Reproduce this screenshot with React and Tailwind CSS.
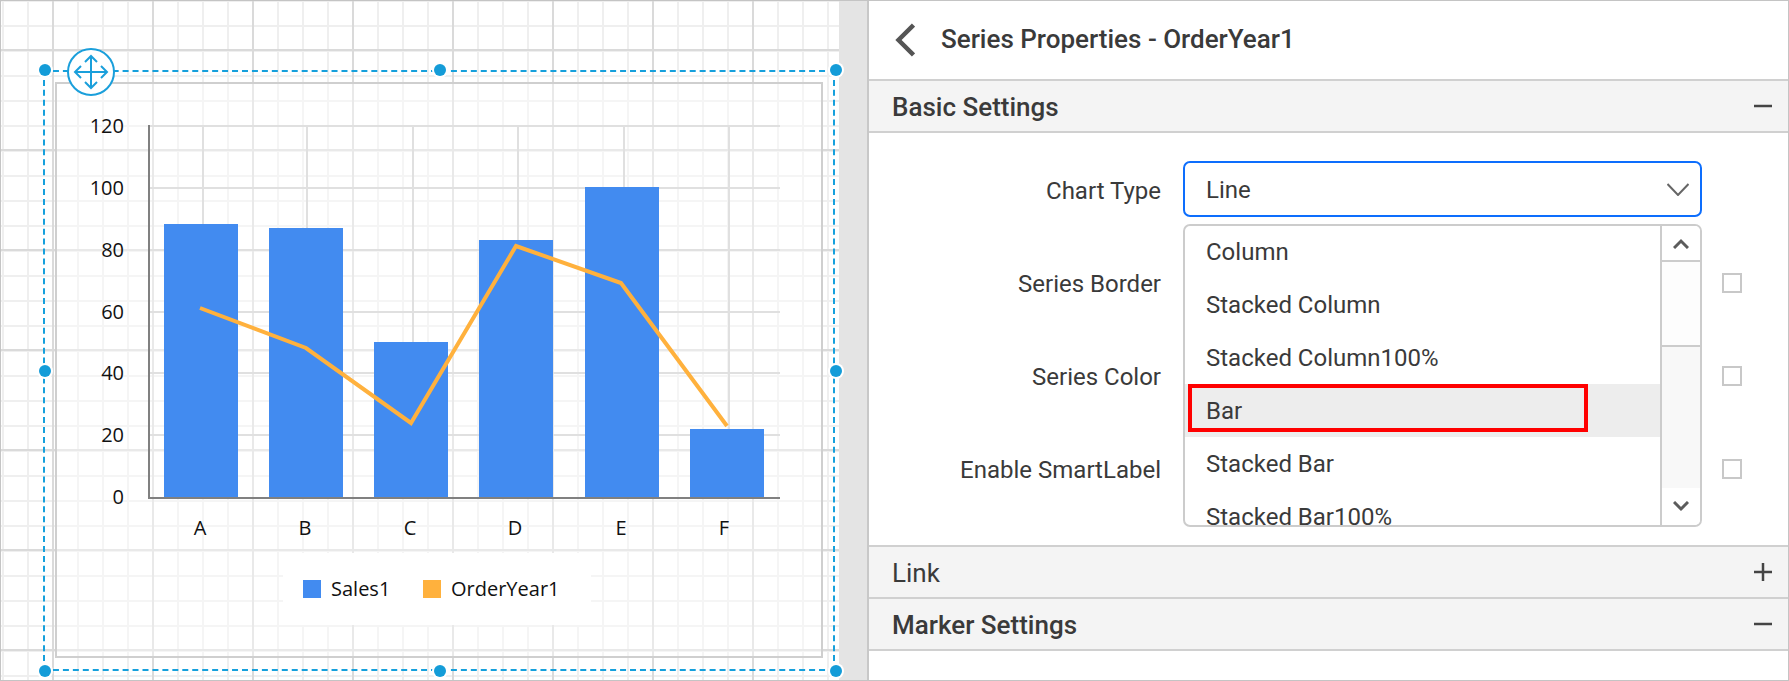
import React from 'react';

const bars = [
  { label: 'A', x: 164, top: 224 },
  { label: 'B', x: 269, top: 228 },
  { label: 'C', x: 374, top: 342 },
  { label: 'D', x: 479, top: 240 },
  { label: 'E', x: 585, top: 187 },
  { label: 'F', x: 690, top: 429 },
];
const gridY = [126, 188, 250, 312, 373, 435];
const gridX = [203, 307, 413, 518, 624, 729];
const ticks = [
  { v: '120', y: 126 },
  { v: '100', y: 188 },
  { v: '80', y: 250 },
  { v: '60', y: 312 },
  { v: '40', y: 373 },
  { v: '20', y: 435 },
  { v: '0', y: 497 },
];
const items = ['Column', 'Stacked Column', 'Stacked Column100%', 'Bar', 'Stacked Bar', 'Stacked Bar100%'];

function Handle({ className }) {
  return <span className={`absolute w-[12px] h-[12px] rounded-full bg-[#149cd8] ring-2 ring-white ${className}`} />;
}

function MoveIcon() {
  return (
    <svg className="absolute left-[21px] top-[-25px]" width="50" height="50" viewBox="0 0 50 50" fill="none" stroke="#1a9fdb" strokeWidth="2">
      <circle cx="25" cy="25" r="23" fill="#fff" />
      <path d="M25 9V41M9 25H41" />
      <path d="M19 15L25 9L31 15M19 35L25 41L31 35M15 19L9 25L15 31M35 19L41 25L35 31" />
    </svg>
  );
}

function Chart() {
  return (
    <svg width="763" height="469" viewBox="57 84 763 469" className="block" style={{ fontFamily: '"Open Sans", sans-serif' }}>
      {gridY.map((y) => (
        <line key={y} x1="149" x2="780" y1={y} y2={y} stroke="#e0e0e0" strokeWidth="2" />
      ))}
      {gridX.map((x) => (
        <line key={x} x1={x} x2={x} y1="126" y2="497" stroke="#e0e0e0" strokeWidth="2" />
      ))}
      {bars.map((b) => (
        <rect key={b.label} x={b.x} y={b.top} width="74" height={497 - b.top} fill="#428bf0" />
      ))}
      <path d="M149 125V498H780" fill="none" stroke="#808080" strokeWidth="2" />
      <polyline points="200,308 306,348 411,423 516,246 621,283 727,426" fill="none" stroke="#ffb13d" strokeWidth="4" />
      {ticks.map((t) => (
        <text key={t.v} x="124" y={t.y + 7} textAnchor="end" fontSize="20" fill="#111">{t.v}</text>
      ))}
      {bars.map((b, i) => (
        <text key={b.label} x={b.x + 36 - (i === 5 ? 2 : 0)} y="535" textAnchor="middle" fontSize="20" fill="#111">{b.label}</text>
      ))}
    </svg>
  );
}

function Legend() {
  return (
    <div className="ml-[226px] w-[308px] h-[72px] bg-white flex items-center pl-[20px] text-[20px] text-[#111] font-['Open_Sans',sans-serif]">
      <span className="w-[18px] h-[18px] bg-[#428bf0]" />
      <span className="ml-[10px] w-[92px]">Sales1</span>
      <span className="w-[18px] h-[18px] bg-[#ffb13d]" />
      <span className="ml-[10px]">OrderYear1</span>
    </div>
  );
}

function SectionHeader({ title, medium, icon }) {
  return (
    <div className="h-[52px] shrink-0 flex items-center justify-between bg-[#f4f4f4] border-b-2 border-[#d0d0d0] pl-[23px] pr-[16px]">
      <span className={`text-[26px] leading-[30px] translate-y-[1px] text-[#3a3a3a] ${medium ? 'font-medium' : ''}`}>{title}</span>
      <svg width="18" height="18" viewBox="0 0 18 18" stroke="#444" strokeWidth="2.5">
        <path d={icon === 'plus' ? 'M0 9H18M9 0V18' : 'M0 9H18'} />
      </svg>
    </div>
  );
}

function CheckRow({ label }) {
  return (
    <div className="h-[56px] flex items-center">
      <span className="w-[292px] text-right text-[24px] leading-[28px] translate-y-[1px] text-[#3a3a3a]">{label}</span>
      <span className="ml-[561px] w-[20px] h-[20px] border-2 border-[#c8c8c8]" />
    </div>
  );
}

function DropdownList() {
  return (
    <div className="absolute left-[314px] top-[91px] w-[519px] h-[303px] flex bg-white border-2 border-[#cccccc] rounded-[7px] overflow-hidden">
      <div className="flex-1 -mt-[1px] text-[24px] leading-[28px] text-[#3a3a3a]">
        {items.map((item) => (
          <div key={item} className={`relative h-[53px] flex items-center pl-[21px] ${item === 'Bar' ? 'bg-[#ededed]' : ''}`}>
            {item}
            {item === 'Bar' && <span className="absolute left-[3px] top-0 w-[400px] h-[48px] border-4 border-[#ff0000]" />}
          </div>
        ))}
      </div>
      <div className="w-[40px] flex flex-col border-l-2 border-[#cccccc]">
        <div className="h-[36px] flex items-center justify-center bg-white border-b-2 border-[#cccccc]">
          <svg width="16" height="11" viewBox="0 0 16 11" fill="none" stroke="#5c5c5c" strokeWidth="3"><path d="M1 10L8 3L15 10" /></svg>
        </div>
        <div className="h-[85px] bg-[#fdfdfd] border-b-2 border-[#cccccc]" />
        <div className="flex-1 bg-[#f8f8f8]" />
        <div className="h-[37px] flex items-center justify-center bg-white">
          <svg width="16" height="11" viewBox="0 0 16 11" fill="none" stroke="#5c5c5c" strokeWidth="3"><path d="M1 1L8 8L15 1" /></svg>
        </div>
      </div>
    </div>
  );
}

export default function App() {
  return (
    <div className="w-[1789px] h-[681px] flex overflow-hidden bg-white border border-[#c4c4c4] font-['Roboto',sans-serif]">
      <div className="w-[838px] shrink-0 pl-[42px] pt-[69px] bg-white bg-[linear-gradient(to_right,#dadada_2px,transparent_2px),linear-gradient(to_bottom,#dadada_2px,transparent_2px),linear-gradient(to_right,#efefef_2px,transparent_2px),linear-gradient(to_bottom,#efefef_2px,transparent_2px)] bg-[size:100px_100px,100px_100px,25px_25px,25px_25px] bg-[position:51px_0,0_48px,1px_0,0_-1px]">
        <div className="relative w-[792px] h-[601px] p-[10px] border-2 border-dashed border-[#16a0dc]">
          <Handle className="left-[-6px] top-[-8px]" />
          <Handle className="left-[389px] top-[-8px]" />
          <Handle className="right-[-9px] top-[-8px]" />
          <Handle className="left-[-6px] top-[293px]" />
          <Handle className="right-[-9px] top-[293px]" />
          <Handle className="left-[-6px] bottom-[-8px]" />
          <Handle className="left-[389px] bottom-[-8px]" />
          <Handle className="right-[-9px] bottom-[-8px]" />
          <MoveIcon />
          <div className="w-[768px] h-[576px] border-2 border-[#cfcfcf] bg-white/40">
            <Chart />
            <Legend />
          </div>
        </div>
      </div>
      <div className="w-[28px] shrink-0 bg-[#e4e4e4]" />
      <div className="flex-1 flex flex-col border-l-2 border-[#c8c8c8]">
        <div className="h-[80px] shrink-0 flex items-center border-b-2 border-[#d0d0d0]">
          <svg className="ml-[26px]" width="20" height="34" viewBox="0 0 20 34" fill="none" stroke="#555" strokeWidth="4.5"><path d="M18.5 2L3.5 17L18.5 32" /></svg>
          <span className="ml-[26px] -translate-y-[1px] text-[26px] font-medium text-[#3a3a3a]">Series Properties - OrderYear1</span>
        </div>
        <SectionHeader title="Basic Settings" medium icon="minus" />
        <div className="relative h-[412px] shrink-0 pt-[28px]">
          <div className="h-[56px] flex items-center">
            <span className="w-[292px] text-right text-[24px] leading-[28px] translate-y-[2px] text-[#3a3a3a]">Chart Type</span>
            <div className="ml-[22px] w-[519px] h-[56px] flex items-center justify-between pl-[21px] pr-[11px] border-2 border-[#0d6efd] rounded-[7px] text-[24px] leading-[28px] text-[#3a3a3a]">
              <span className="translate-y-[1px]">Line</span>
              <svg width="22" height="13" viewBox="0 0 22 13" fill="none" stroke="#666" strokeWidth="2"><path d="M0.5 1L11 12L21.5 1" /></svg>
            </div>
          </div>
          <div className="mt-[38px] flex flex-col gap-[37px]">
            <CheckRow label="Series Border" />
            <CheckRow label="Series Color" />
            <CheckRow label="Enable SmartLabel" />
          </div>
          <DropdownList />
        </div>
        <div className="border-t-2 border-[#d0d0d0]">
          <SectionHeader title="Link" icon="plus" />
          <SectionHeader title="Marker Settings" medium icon="minus" />
        </div>
      </div>
    </div>
  );
}
